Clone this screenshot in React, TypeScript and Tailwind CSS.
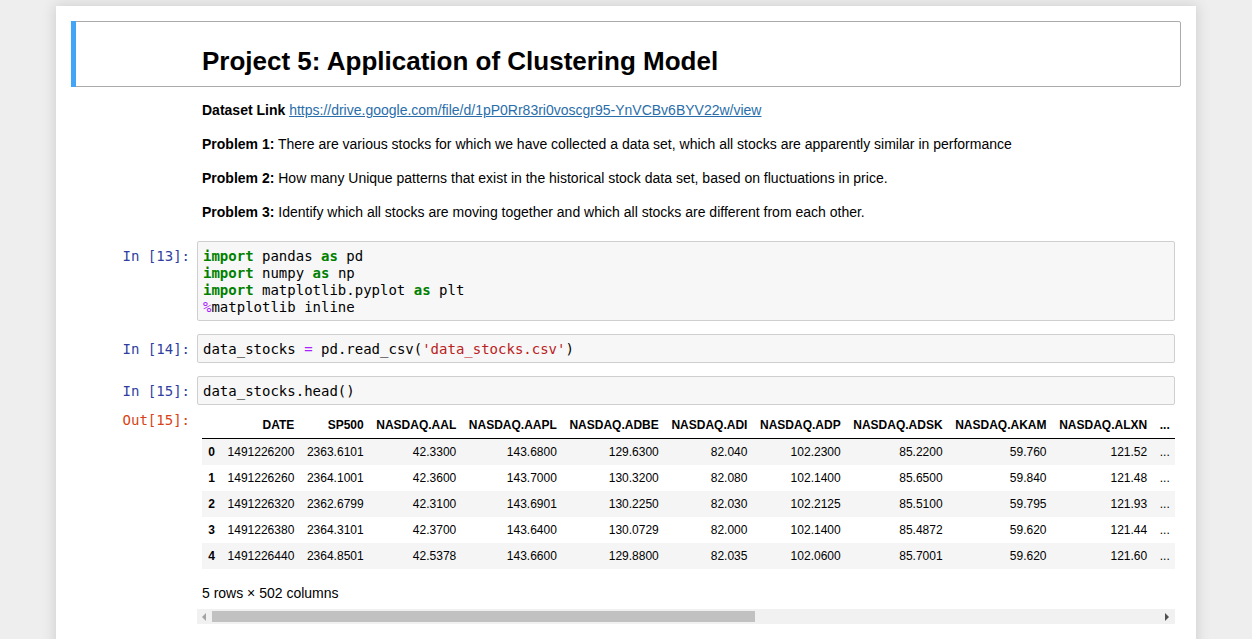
import React from "react";

const mono = { fontFamily: '"DejaVu Sans Mono", "Liberation Mono", monospace' };

const K = ({ children }: { children: React.ReactNode }) => (
  <span className="font-bold text-[#008000]">{children}</span>
);
const Op = ({ children }: { children: React.ReactNode }) => (
  <span className="text-[#aa22ff]">{children}</span>
);
const Str = ({ children }: { children: React.ReactNode }) => (
  <span className="text-[#ba2121]">{children}</span>
);

function Prompt({ kind, n }: { kind: "in" | "out"; n: number }) {
  return (
    <div
      className={`w-[120px] shrink-0 text-right pr-[7px] pt-[7px] text-[14px] leading-[17px] ${
        kind === "in" ? "text-[#303f9f]" : "text-[#d84315]"
      }`}
      style={mono}
    >
      {kind === "in" ? `In [${n}]:` : `Out[${n}]:`}
    </div>
  );
}

function CodeBox({ lines }: { lines: React.ReactNode[] }) {
  return (
    <div
      className="flex-1 border border-[#cfcfcf] rounded-[2px] bg-[#f7f7f7] pt-[6px] pb-[4px] pl-[5px] text-[14px] leading-[17px] text-black"
      style={mono}
    >
      {lines.map((l, i) => (
        <div key={i} className="whitespace-pre h-[17px]">
          {l}
        </div>
      ))}
    </div>
  );
}

const cols = [
  "DATE",
  "SP500",
  "NASDAQ.AAL",
  "NASDAQ.AAPL",
  "NASDAQ.ADBE",
  "NASDAQ.ADI",
  "NASDAQ.ADP",
  "NASDAQ.ADSK",
  "NASDAQ.AKAM",
  "NASDAQ.ALXN",
  "...",
];

const rows = [
  ["1491226200", "2363.6101", "42.3300", "143.6800", "129.6300", "82.040", "102.2300", "85.2200", "59.760", "121.52", "..."],
  ["1491226260", "2364.1001", "42.3600", "143.7000", "130.3200", "82.080", "102.1400", "85.6500", "59.840", "121.48", "..."],
  ["1491226320", "2362.6799", "42.3100", "143.6901", "130.2250", "82.030", "102.2125", "85.5100", "59.795", "121.93", "..."],
  ["1491226380", "2364.3101", "42.3700", "143.6400", "130.0729", "82.000", "102.1400", "85.4872", "59.620", "121.44", "..."],
  ["1491226440", "2364.8501", "42.5378", "143.6600", "129.8800", "82.035", "102.0600", "85.7001", "59.620", "121.60", "..."],
];

function DataTable() {
  return (
    <table className="border-collapse text-[12px] leading-[14px] text-black whitespace-nowrap">
      <thead>
        <tr>
          <th className="px-[6.3px] py-[6px] border-b border-black"></th>
          {cols.map((c, i) => (
            <th key={i} className="px-[6.3px] py-[6px] text-right font-bold border-b border-black">
              {c}
            </th>
          ))}
        </tr>
      </thead>
      <tbody>
        {rows.map((r, ri) => (
          <tr key={ri} className={ri % 2 === 0 ? "bg-[#f5f5f5]" : "bg-white"}>
            <th className="px-[6.3px] py-[6px] text-right font-bold">{ri}</th>
            {r.map((v, ci) => (
              <td key={ci} className="px-[6.3px] py-[6px] text-right font-normal">
                {v}
              </td>
            ))}
          </tr>
        ))}
      </tbody>
    </table>
  );
}

function Scrollbar() {
  return (
    <div className="flex h-[15px] bg-[#f1f1f1]">
      <div className="w-[15px] shrink-0 flex items-center justify-center">
        <svg width="5" height="8" viewBox="0 0 5 8">
          <polygon points="4,0 4,8 0,4" fill="#a3a3a3" />
        </svg>
      </div>
      <div className="flex-1 py-[2px]">
        <div className="h-[11px] w-[543px] bg-[#c1c1c1]"></div>
      </div>
      <div className="w-[15px] shrink-0 flex items-center justify-center">
        <svg width="5" height="8" viewBox="0 0 5 8">
          <polygon points="0,0 0,8 4,4" fill="#505050" />
        </svg>
      </div>
    </div>
  );
}

export default function App() {
  const sans = { fontFamily: '"Liberation Sans", Arial, Helvetica, sans-serif' };
  return (
    <div className="min-h-screen bg-[#eeeeee] pt-[6px] overflow-hidden" style={sans}>
      <div className="mx-auto w-[1140px] min-h-[700px] bg-white px-[15px] pt-[15px] pb-[15px] shadow-[0px_0px_12px_1px_rgba(87,87,87,0.2)]">
        {/* Selected markdown heading cell */}
        <div className="relative border border-[#ababab] rounded-[2px] p-[5px]">
          <span className="absolute left-[-1px] top-[-1px] bottom-[-1px] w-[5px] bg-[#42a5f5]"></span>
          <div className="flex">
            <div className="w-[120px] shrink-0"></div>
            <div className="flex-1 pl-[5px] py-[7px]">
              <h1 className="mt-[14px] text-[26px] leading-[26px] font-bold text-black">
                Project 5: Application of Clustering Model
              </h1>
            </div>
          </div>
        </div>

        {/* Markdown text cell */}
        <div className="border border-transparent p-[5px]">
          <div className="flex">
            <div className="w-[120px] shrink-0"></div>
            <div className="flex-1 pl-[5px] py-[7px] text-[14px] leading-[20px] text-black">
              <p className="mb-[14px]">
                <b>Dataset Link</b>{" "}
                <a className="text-[#296eaa] underline" href="#">
                  https://drive.google.com/file/d/1pP0Rr83ri0voscgr95-YnVCBv6BYV22w/view
                </a>
              </p>
              <p className="mb-[14px]">
                <b>Problem 1:</b> There are various stocks for which we have collected a data set, which all stocks are apparently similar in performance
              </p>
              <p className="mb-[14px]">
                <b>Problem 2:</b> How many Unique patterns that exist in the historical stock data set, based on fluctuations in price.
              </p>
              <p>
                <b>Problem 3:</b> Identify which all stocks are moving together and which all stocks are different from each other.
              </p>
            </div>
          </div>
        </div>

        {/* In [13] */}
        <div className="border border-transparent px-[5px] pt-[5px] pb-[6px]">
          <div className="flex">
            <Prompt kind="in" n={13} />
            <CodeBox
              lines={[
                <><K>import</K> pandas <K>as</K> pd</>,
                <><K>import</K> numpy <K>as</K> np</>,
                <><K>import</K> matplotlib.pyplot <K>as</K> plt</>,
                <><Op>%</Op>matplotlib inline</>,
              ]}
            />
          </div>
        </div>

        {/* In [14] */}
        <div className="border border-transparent px-[5px] pt-[5px] pb-[6px]">
          <div className="flex">
            <Prompt kind="in" n={14} />
            <CodeBox
              lines={[
                <>data_stocks <Op>=</Op> pd.read_csv(<Str>'data_stocks.csv'</Str>)</>,
              ]}
            />
          </div>
        </div>

        {/* In [15] / Out [15] */}
        <div className="border border-transparent px-[5px] pt-[5px] pb-[6px]">
          <div className="flex">
            <Prompt kind="in" n={15} />
            <CodeBox lines={[<>data_stocks.head()</>]} />
          </div>
          <div className="flex">
            <Prompt kind="out" n={15} />
            <div className="w-[978px] shrink-0">
              <div className="overflow-hidden px-[5px] pt-[7px] pb-[6px]">
                <DataTable />
                <p className="mt-[14px] text-[14px] leading-[20px] text-black">5 rows × 502 columns</p>
              </div>
              <Scrollbar />
            </div>
          </div>
        </div>
      </div>
    </div>
  );
}
